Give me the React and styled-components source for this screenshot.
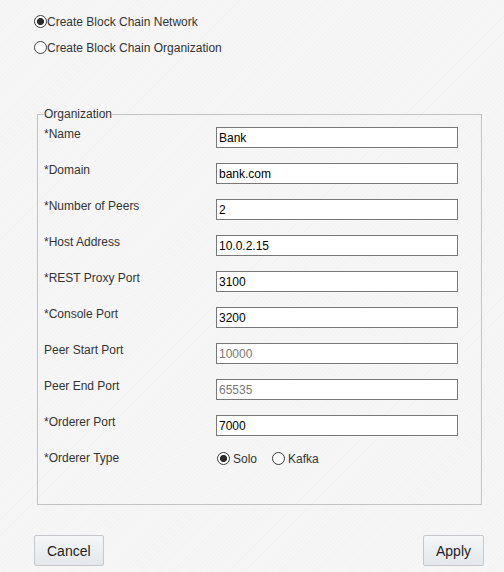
import React, { useState } from "react";
import styled, { createGlobalStyle } from "styled-components";

const Global = createGlobalStyle`
  html, body {
    margin: 0;
    padding: 0;
  }
  body {
    width: 504px;
    height: 572px;
    overflow: hidden;
    background-color: #f6f6f6;
    background-image: repeating-linear-gradient(
      -45deg,
      rgba(0,0,0,0.012) 0px,
      rgba(0,0,0,0.012) 1px,
      transparent 1px,
      transparent 3px
    );
    font-family: "Liberation Sans", Arial, sans-serif;
    font-size: 12px;
    color: #333;
  }
`;

const Page = styled.div`
  display: flex;
  flex-direction: column;
  padding: 15px 20px 0 34px;
  height: 572px;
  box-sizing: border-box;
`;

const ModeList = styled.div`
  display: flex;
  flex-direction: column;
  gap: 13px;
`;

const RadioLabel = styled.label`
  display: flex;
  align-items: center;
  gap: ${(p) => p.$gap || 0}px;
  height: 13px;
  line-height: 14px;
  color: #333;
  cursor: default;
`;

const Radio = styled.input.attrs({ type: "radio" })`
  appearance: none;
  -webkit-appearance: none;
  margin: 0;
  width: 13px;
  height: 13px;
  box-sizing: border-box;
  border: 1px solid #3a3a3a;
  border-radius: 50%;
  background: #fff;
  flex: none;
  &:checked {
    background: radial-gradient(circle, #2b2b2b 0 3.3px, #fff 3.8px);
  }
`;

const Fieldset = styled.fieldset`
  margin: 53px 0 0 3px;
  width: 445px;
  box-sizing: border-box;
  border: 1px solid #c3c3c3;
  padding: 4px 6px 19px 6px;
  min-width: 0;
`;

const Legend = styled.legend`
  padding: 0;
  font-size: 12px;
  line-height: 14px;
  color: #333;
`;

const Row = styled.div`
  display: flex;
  align-items: flex-start;
  height: 36px;
`;

const FieldLabel = styled.div`
  width: 172px;
  flex: none;
  margin-top: 2px;
  line-height: 14px;
  color: #333;
`;

const TextInput = styled.input`
  margin: 2px 0 0 0;
  width: 242px;
  height: 21px;
  box-sizing: border-box;
  border: 1px solid #777;
  border-radius: 0;
  padding: 0 2px;
  font-family: "Liberation Sans", Arial, sans-serif;
  font-size: 12px;
  color: ${(p) => (p.disabled ? "#777" : "#000")};
  background: #fff;
  outline: none;
  &:disabled {
    background: #fff;
  }
`;

const RadioGroup = styled.div`
  display: flex;
  align-items: center;
  gap: 15px;
  margin: 3px 0 0 1px;
`;

const ButtonBar = styled.div`
  display: flex;
  justify-content: space-between;
  margin-top: 30px;
  width: 450px;
`;

const Button = styled.button`
  height: 31px;
  padding: 0 ${(p) => p.$pad}px;
  border: 1px solid #c5c9cd;
  border-radius: 2px;
  background: linear-gradient(#f5f7f9, #e3e7ea);
  font-family: "Liberation Sans", Arial, sans-serif;
  font-size: 14px;
  color: #222;
  cursor: pointer;
`;

const fields = [
  { label: "*Name", value: "Bank" },
  { label: "*Domain", value: "bank.com" },
  { label: "*Number of Peers", value: "2" },
  { label: "*Host Address", value: "10.0.2.15" },
  { label: "*REST Proxy Port", value: "3100" },
  { label: "*Console Port", value: "3200" },
  { label: "Peer Start Port", value: "10000", disabled: true },
  { label: "Peer End Port", value: "65535", disabled: true },
  { label: "*Orderer Port", value: "7000" },
];

export default function App() {
  const [mode, setMode] = useState("network");
  const [type, setType] = useState("solo");
  const [values, setValues] = useState(fields.map((f) => f.value));

  return (
    <>
      <Global />
      <Page>
        <ModeList>
          <RadioLabel>
            <Radio
              name="mode"
              checked={mode === "network"}
              onChange={() => setMode("network")}
            />
            Create Block Chain Network
          </RadioLabel>
          <RadioLabel>
            <Radio
              name="mode"
              checked={mode === "org"}
              onChange={() => setMode("org")}
            />
            Create Block Chain Organization
          </RadioLabel>
        </ModeList>

        <Fieldset>
          <Legend>Organization</Legend>
          {fields.map((f, i) => (
            <Row key={f.label}>
              <FieldLabel>{f.label}</FieldLabel>
              <TextInput
                value={values[i]}
                disabled={f.disabled}
                onChange={(e) => {
                  const next = [...values];
                  next[i] = e.target.value;
                  setValues(next);
                }}
              />
            </Row>
          ))}
          <Row>
            <FieldLabel>*Orderer Type</FieldLabel>
            <RadioGroup>
              <RadioLabel $gap={3}>
                <Radio
                  name="otype"
                  checked={type === "solo"}
                  onChange={() => setType("solo")}
                />
                Solo
              </RadioLabel>
              <RadioLabel $gap={3}>
                <Radio
                  name="otype"
                  checked={type === "kafka"}
                  onChange={() => setType("kafka")}
                />
                Kafka
              </RadioLabel>
            </RadioGroup>
          </Row>
        </Fieldset>

        <ButtonBar>
          <Button $pad={12}>Cancel</Button>
          <Button $pad={12}>Apply</Button>
        </ButtonBar>
      </Page>
    </>
  );
}
